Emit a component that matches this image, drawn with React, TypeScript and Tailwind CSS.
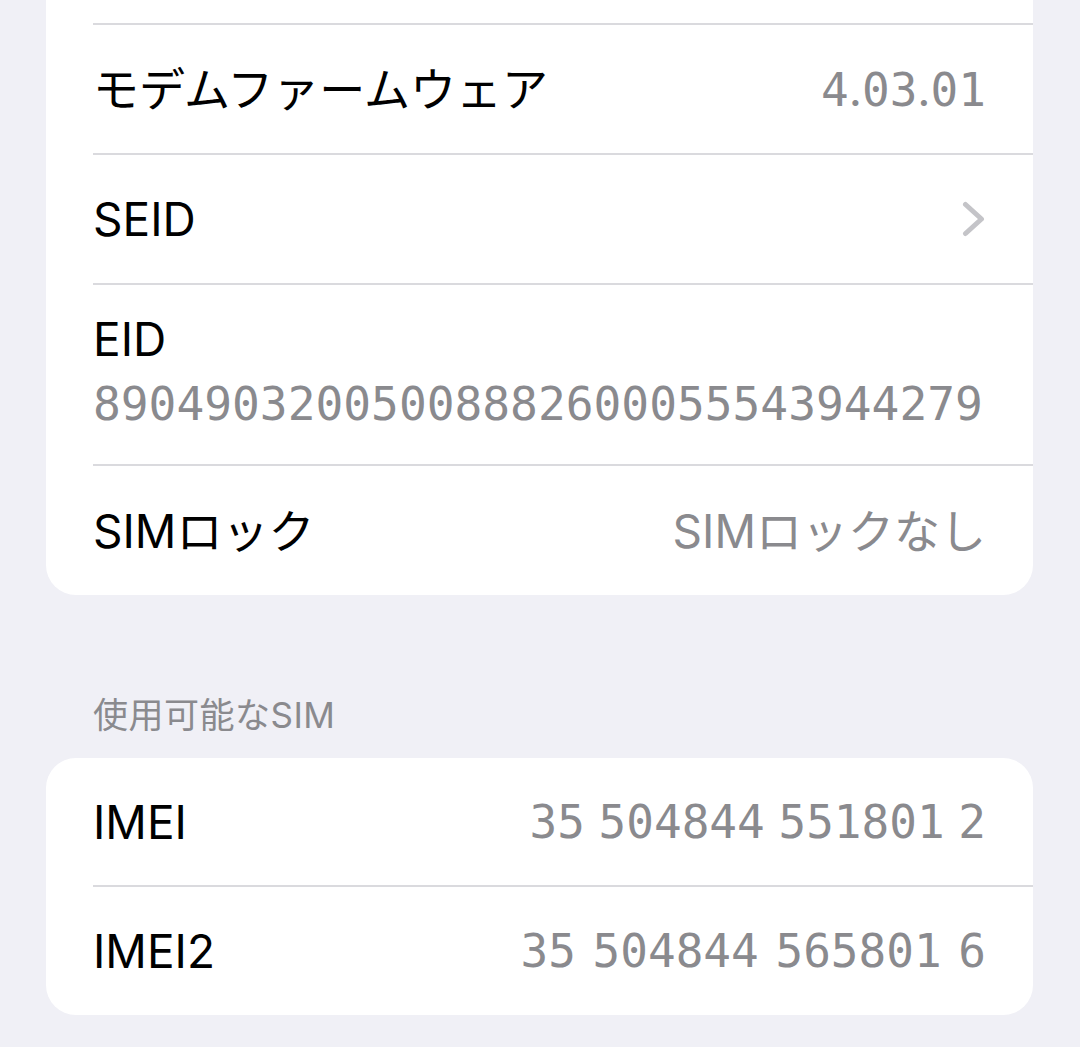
import React from "react";

const sans = "font-['Inter','Noto_Sans_CJK_JP',sans-serif]";
const mono = "font-['DejaVu_Sans_Mono',monospace]";

function Divider() {
  return <div className="ml-[47px] h-[2px] bg-[#dadade]" />;
}

function Version({ text }: { text: string }) {
  return (
    <span className={`${mono} text-[46px] leading-[56px] text-[#8a8a8e]`}>
      {text.split("").map((c, i) =>
        c === "." ? (
          <span key={i} className={sans}>
            .
          </span>
        ) : (
          <span key={i}>{c}</span>
        )
      )}
    </span>
  );
}

function Row({
  label,
  children,
  h = "h-[128px]",
}: {
  label: string;
  children?: React.ReactNode;
  h?: string;
}) {
  return (
    <div className={`flex items-center justify-between pl-[47px] pr-[47px] ${h}`}>
      <span className={`${sans} text-[46px] leading-[56px] text-black`}>{label}</span>
      {children}
    </div>
  );
}

function Chevron() {
  return (
    <svg width="24" height="36" viewBox="0 0 24 36" fill="none">
      <path
        d="M3.5 3.5 L19.5 18 L3.5 32.5"
        stroke="#c4c4c8"
        strokeWidth="5"
        strokeLinecap="round"
        strokeLinejoin="round"
      />
    </svg>
  );
}

export default function App() {
  return (
    <div className="w-[1080px] h-[1047px] bg-[#f0f0f6] overflow-hidden">
      <div className="mx-[46px] w-[987px] bg-white rounded-b-[30px]">
        <div className="h-[23px]" />
        <Divider />
        <Row label="モデムファームウェア">
          <Version text="4.03.01" />
        </Row>
        <Divider />
        <Row label="SEID">
          <div className="flex items-center">
            <Chevron />
          </div>
        </Row>
        <Divider />
        <div className="h-[179px] pl-[47px] pr-[47px] pt-[26px] flex flex-col">
          <span className={`${sans} text-[46px] leading-[56px] text-black`}>EID</span>
          <span className={`${mono} mt-[9px] text-[46.2px] leading-[56px] text-[#8a8a8e]`}>
            89049032005008882600055543944279
          </span>
        </div>
        <Divider />
        <Row label="SIMロック" h="h-[129px]">
          <span className={`${sans} text-[46px] leading-[56px] text-[#8a8a8e]`}>SIMロックなし</span>
        </Row>
      </div>

      <div className="h-[163px] pl-[93px] flex items-end pb-[21px]">
        <span className={`${sans} text-[35px] leading-[44px] text-[#8a8a8e] tracking-[0.5px]`}>使用可能なSIM</span>
      </div>

      <div className="mx-[46px] w-[987px] bg-white rounded-[30px]">
        <Row label="IMEI" h="h-[127px]">
          <span className={`${mono} text-[46px] leading-[56px] text-[#8a8a8e] [word-spacing:-14px]`}>
            35 504844 551801 2
          </span>
        </Row>
        <Divider />
        <Row label="IMEI2" h="h-[128px]">
          <span className={`${mono} text-[46px] leading-[56px] text-[#8a8a8e] [word-spacing:-11px]`}>
            35 504844 565801 6
          </span>
        </Row>
      </div>
    </div>
  );
}
